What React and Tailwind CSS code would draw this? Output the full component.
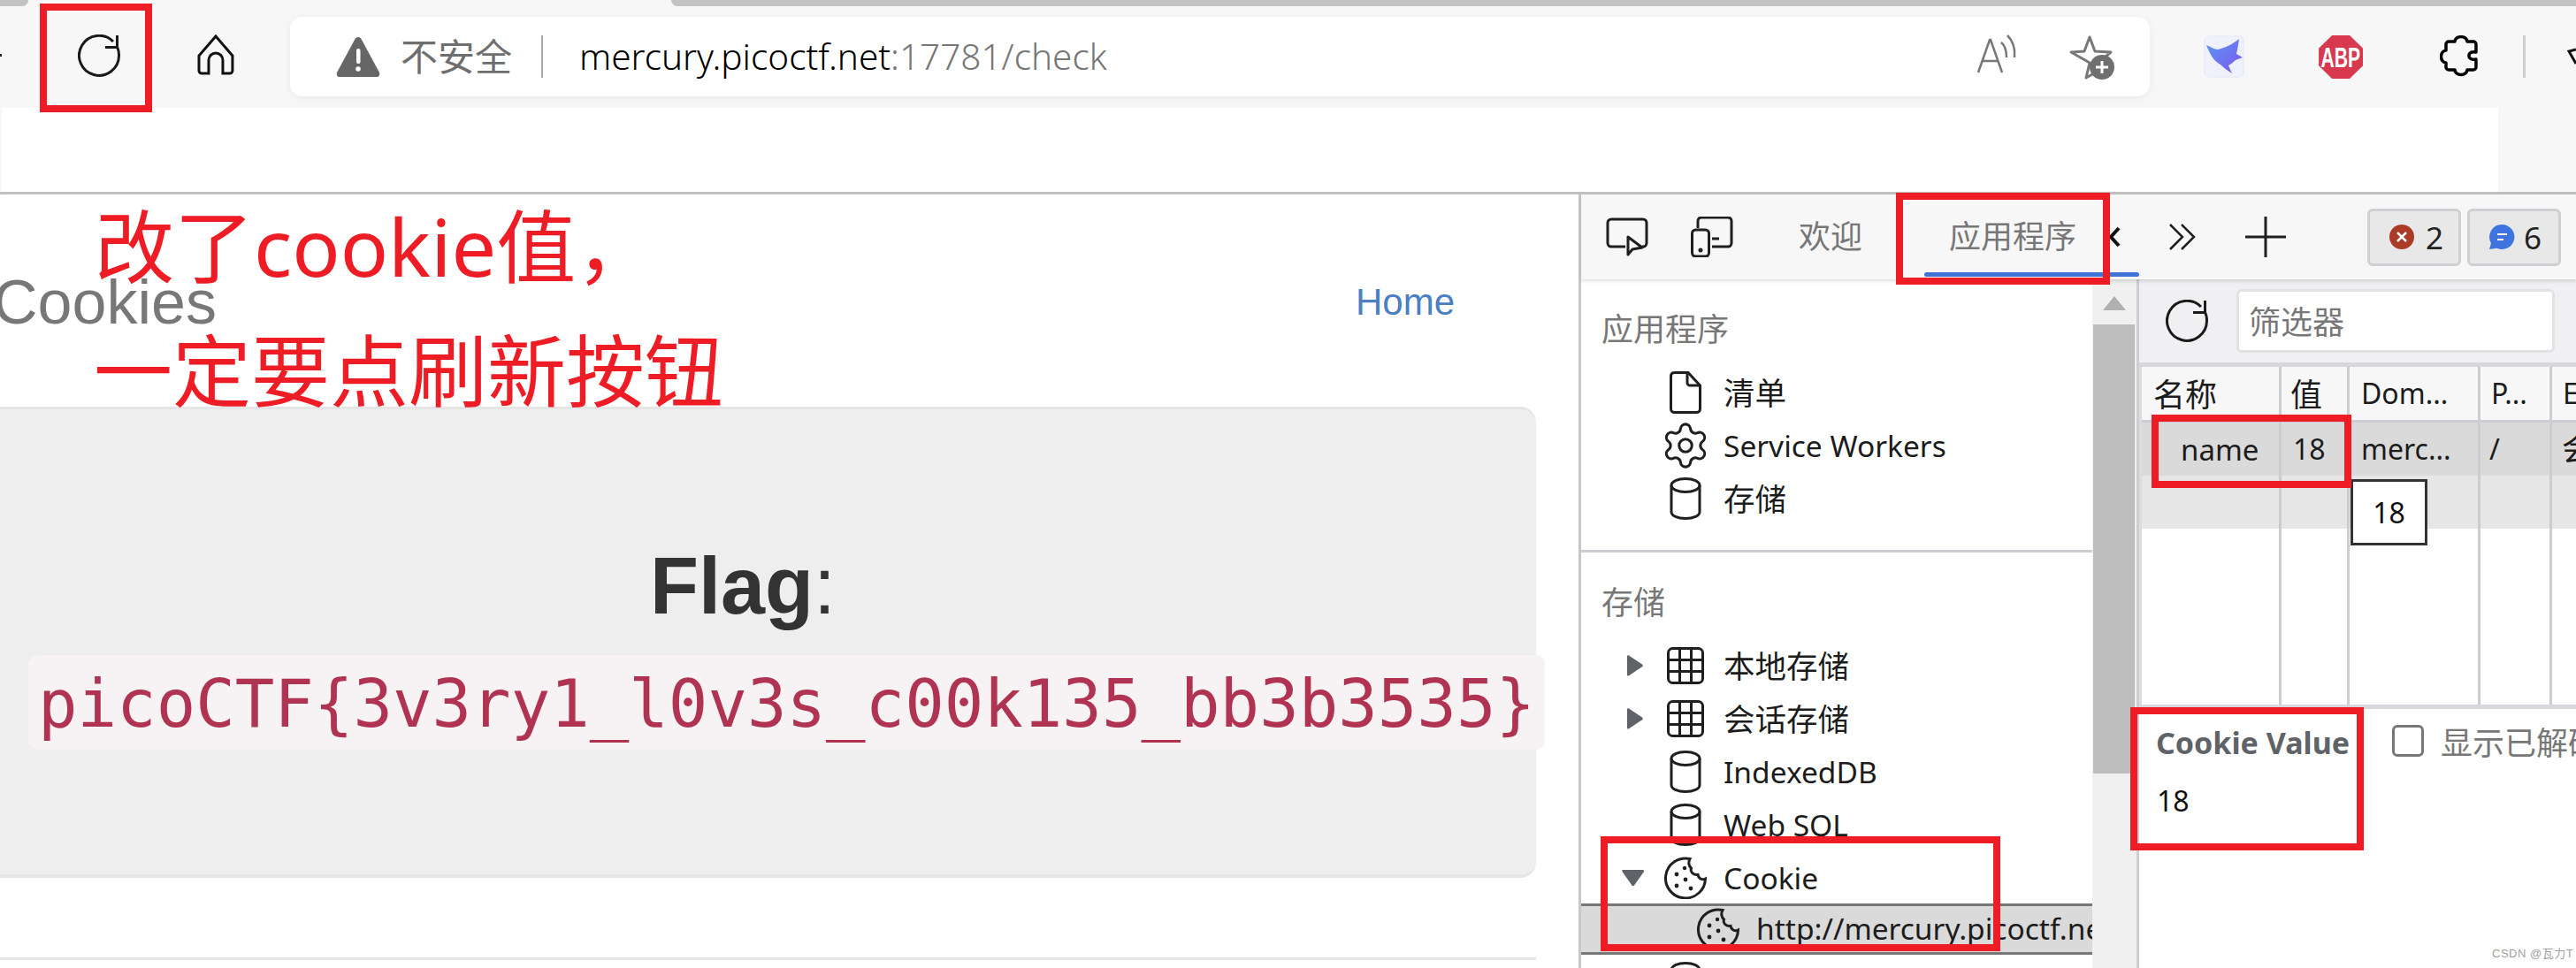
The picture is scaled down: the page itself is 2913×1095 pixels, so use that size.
import React from "react";
import { Settings } from "lucide-react";

const Refresh = ({ c = "w-[48px] h-[48px]", stroke = 3 }) => (
  <svg viewBox="0 0 48 48" className={c} fill="none" stroke="#1a1a1a" strokeWidth={stroke}>
    <path d="M40 8A22.500 22.500 0 1 0 46.500 24a22.500 22.500 0 0 0-2-10" />
    <path d="M44.500 1v13.500H31" />
  </svg>
);
const Cylinder = ({ c = "" }) => (
  <svg viewBox="0 0 36 48" className={"w-[36px] h-[48px] " + c} fill="none" stroke="#1f1f1f" strokeWidth="3">
    <ellipse cx="18" cy="9" rx="16" ry="7.500" />
    <path d="M2 9v30c0 4.500 7 7.500 16 7.500s16-3 16-7.500V9" />
  </svg>
);
const Doc = () => (
  <svg viewBox="0 0 36 48" className="w-[36px] h-[48px]" fill="none" stroke="#1f1f1f" strokeWidth="3">
    <path d="M5 1.500h16L34.500 16v26.500a4 4 0 0 1-4 4H5.500a4 4 0 0 1-4-4V5a4 4 0 0 1 4-3.500z" />
    <path d="M20 2v11a3 3 0 0 0 3 3h11" />
  </svg>
);
const Grid = () => (
  <svg viewBox="0 0 42 42" className="w-[42px] h-[42px]" fill="none" stroke="#1f1f1f" strokeWidth="3">
    <rect x="1.500" y="1.500" width="39" height="39" rx="5" />
    <path d="M14.500 2v38M27.500 2v38M2 14.500h38M2 27.500h38" />
  </svg>
);
const CookieI = () => (
  <svg viewBox="0 0 48 48" className="w-[48px] h-[48px] shrink-0" fill="none" stroke="#1f1f1f" strokeWidth="3">
    <path d="M29 2.500A22.500 22.500 0 1 0 46.500 25c-4 2-8-.5-8.500-4.500-5 .5-9-3-7.500-7.500-3-2-3.500-7-1.500-10.500z" />
    <g fill="#1f1f1f" stroke="none">
      <circle cx="14" cy="20" r="2.400" /><circle cx="23" cy="13" r="2.200" /><circle cx="24" cy="26" r="2.400" /><circle cx="14" cy="33" r="2.400" /><circle cx="30" cy="36" r="2.400" />
    </g>
  </svg>
);
const TriRight = () => (
  <svg viewBox="0 0 32 24" className="w-[32px] h-[24px]"><path d="M6 1.500c0-1 1-1.500 2-1l15 10c1 .8 1 2 0 2.800l-15 10c-1 .6-2 0-2-1z" fill="#5f6368" /></svg>
);
const TriDown = () => (
  <svg viewBox="0 0 32 20" className="w-[32px] h-[20px]"><path d="M1 1h23c1 0 1.500 1 1 2L14 18.500c-.8 1-2 1-2.600 0L.5 3C0 2 0 1 1 1z" fill="#5f6368" /></svg>
);

const Item = ({ icon, slot, cjk, children }) => (
  <div className="flex items-center h-[60px] pl-[46px] shrink-0">
    <div className="w-[32px] flex justify-start items-center">{slot}</div>
    <div className="w-[48px] ml-[16px] flex justify-center items-center">{icon}</div>
    <span className={cjk ? "ml-[19px] text-[#1c1c1c] text-[35.500px] leading-[60px] whitespace-nowrap" : "ml-[19px] text-[#1c1c1c] text-[33.500px] leading-[60px] whitespace-nowrap"}>{children}</span>
  </div>
);

const Red = ({ c }) => <div className={"absolute z-20 border-[8px] border-[#ee1c25] " + c} />;

export default function App() {
  return (
    <div className="relative w-[2913px] h-[1095px] overflow-hidden bg-white flex flex-col [font-family:'Noto_Sans','Noto_Sans_CJK_SC',sans-serif]">
      {/* tab strip */}
      <div className="h-[7px] shrink-0 flex bg-[#f7f7f7]">
        <div className="w-[32px] bg-[#c2c2c2] rounded-br-[8px]" />
        <div className="flex-1" />
        <div className="w-[2154px] bg-[#c2c2c2] rounded-bl-[8px]" />
      </div>

      {/* toolbar */}
      <div className="h-[115px] shrink-0 bg-[#f7f7f7] flex items-start">
        <div className="w-[2px] h-[3px] mt-[54px] bg-[#222]" />
        <div className="ml-[86px] mt-[32px]"><Refresh /></div>
        <svg viewBox="0 0 42 46" className="w-[42px] h-[46px] ml-[87px] mt-[32px]" fill="none" stroke="#111" strokeWidth="3">
          <path d="M21 2 40 24v17a3 3 0 0 1-3 3h-8V29a8 8 0 0 0-16 0v15H5a3 3 0 0 1-3-3V24z" />
        </svg>
        <div className="ml-[63px] mt-[12px] w-[2106px] h-[90px] bg-white rounded-[14px] shadow-[0_2px_10px_rgba(0,0,0,0.06)] flex items-center relative">
          <svg viewBox="0 0 50 46" className="w-[50px] h-[46px] ml-[52px]">
            <path d="M25 1c2 0 3 1 4 3l20 37c1 3-1 5-3 5H4c-2 0-4-2-3-5L21 4c1-2 2-3 4-3z" fill="#666" />
            <rect x="23" y="14" width="4.500" height="17" rx="2" fill="#fff" /><circle cx="25" cy="37" r="2.800" fill="#fff" />
          </svg>
          <span className="ml-[23px] text-[42px] leading-none text-[#6e6e6e]">不安全</span>
          <div className="ml-[33px] w-[2px] h-[48px] bg-[#a8a8a8]" />
          <span className="ml-[41px] text-[40.500px] leading-none whitespace-nowrap text-black font-light">mercury.picoctf.net<span className="text-[#777]">:17781/check</span></span>
          <svg viewBox="0 0 46 44" className="absolute left-[1908px] top-[20px] w-[46px] h-[44px]" fill="none" stroke="#777" strokeWidth="2.500">
            <path d="M1 43 14 6h1l13 37M6 30h17" />
            <path d="M27 9c5 4 6 10 6 17M34 1c6 6 9 15 8 25" />
          </svg>
          <svg viewBox="0 0 54 52" className="absolute left-[2011px] top-[20px] w-[54px] h-[52px]">
            <path d="M24 3 30 19l18 1-14 12 2 8-16 9 4-17L3 20l15-1z" fill="none" stroke="#777" strokeWidth="3" strokeLinejoin="round" />
            <circle cx="38" cy="37" r="14" fill="#6f6f6f" />
            <path d="M38 30v14M31 37h14" stroke="#fff" strokeWidth="3" />
          </svg>
        </div>
        <svg viewBox="0 0 46 48" className="w-[46px] h-[48px] ml-[61px] mt-[33px]">
          <defs>
            <linearGradient id="bird" x1="0" y1="0" x2="1" y2="1"><stop offset="0" stopColor="#5a96f2" /><stop offset="1" stopColor="#7d58ee" /></linearGradient>
          </defs>
          <rect x="1" y="1" width="44" height="46" rx="5" fill="#eff1fc" stroke="#e2e6f6" />
          <path d="M3 11C8 13 12 16 16 16 24 14 33 10 40 4 39 12 38 17 37 21L44 25 36 28C33 31 30 33 28 34L32 43C27 40 22 36 19 33 11 29 7 21 3 11z" fill="url(#bird)" />
        </svg>
        <div className="ml-[84px] mt-[33px] w-[50px] h-[49px] bg-[#d8394f] [clip-path:polygon(30%_0,70%_0,100%_30%,100%_70%,70%_100%,30%_100%,0_70%,0_30%)] flex items-center justify-center text-white font-bold text-[32px] leading-none [font-family:'Liberation_Sans',sans-serif]"><span className="inline-block scale-x-[0.66]">ABP</span></div>
        <svg viewBox="0 0 44 48" className="w-[44px] h-[48px] ml-[87px] mt-[33px]" fill="none" stroke="#000" strokeWidth="3.500" strokeLinejoin="round">
          <path d="M10 7H17c0-3 3-5.500 7-5.500S31 4 31 7H38a3 3 0 0 1 3 3v9c-5-1-8 1-8 4s3 5 8 4v9a3 3 0 0 1-3 3H31c0 3-3 5.500-7 5.500S17 42 17 39H10a3 3 0 0 1-3-3V31c-3 0-5.500-3-5.500-7S4 17 7 17V10a3 3 0 0 1 3-3z" />
        </svg>
        <div className="ml-[50px] mt-[33px] w-[3px] h-[48px] bg-[#cfcfcf]" />
        <svg viewBox="0 0 10 20" className="w-[10px] h-[20px] ml-[47px] mt-[47px]" fill="none" stroke="#111" strokeWidth="3"><path d="M10 2 2 4l8 14" /></svg>
      </div>

      {/* blank band */}
      <div className="h-[95px] shrink-0 bg-[#f7f7f7] flex pl-[2px]">
        <div className="w-[2823px] bg-white" />
      </div>
      <div className="h-[3px] shrink-0 bg-[#c0c0c0]" />

      {/* main */}
      <div className="flex-1 flex min-h-0">
        {/* page */}
        <div className="w-[1785px] shrink-0 flex flex-col overflow-hidden [font-family:'Liberation_Sans',sans-serif]">
          <div className="h-[240px] shrink-0">
            <div className="pt-[77px] flex items-center justify-between w-[1653px] ml-[-8px]">
              <span className="text-[70px] leading-[90px] text-[#777]">Cookies</span>
              <span className="text-[42px] leading-[90px] text-[#4a7fc4]">Home</span>
            </div>
          </div>
          <div className="w-[1737px] h-[533px] shrink-0 bg-[#eeeeee] border-t-[3px] border-b-[4px] border-[#e5e5e5] rounded-br-[18px] rounded-tr-[18px] pt-[150px]">
            <div className="w-[1680px] text-center text-[90px] leading-[100px] text-[#333]"><b>Flag</b>:</div>
            <div className="mt-[28px] ml-[32px] w-[1715px] h-[107px] bg-[#f7f2f4] rounded-[10px] flex items-center pl-[11px] pt-[2px] text-[74px] leading-none whitespace-nowrap text-[#b03352] [font-family:'DejaVu_Sans_Mono',monospace]">
              picoCTF{"{"}3v3ry1_l0v3s_c00k135_bb3b3535{"}"}
            </div>
          </div>
          <div className="mt-[90px] w-[1737px] h-[3px] bg-[#e5e5e5] shrink-0" />
        </div>
        <div className="w-[3px] shrink-0 bg-[#c8c8cc]" />

        {/* devtools */}
        <div className="flex-1 flex flex-col min-w-0">
          <div className="h-[96px] shrink-0 bg-[#f7f7f7] shadow-[0_2px_4px_rgba(0,0,0,0.14)] relative z-10 flex items-center">
            <svg viewBox="0 0 48 44" className="w-[48px] h-[44px] ml-[28px]" fill="none" stroke="#1f1f1f" strokeWidth="3">
              <path d="M22 33H6a4 4 0 0 1-4-4V6a4 4 0 0 1 4-4h36a4 4 0 0 1 4 4v23a4 4 0 0 1-4 4h-1" />
              <path d="M25 22v20l5-6 11-2z" strokeLinejoin="round" />
            </svg>
            <svg viewBox="0 0 48 46" className="w-[48px] h-[46px] ml-[48px]" fill="none" stroke="#1f1f1f" strokeWidth="3">
              <path d="M8 13V5a4 4 0 0 1 4-4h30a4 4 0 0 1 4 4v25a4 4 0 0 1-4 4H24M24 25h8" />
              <rect x="1.500" y="15" width="19" height="30" rx="4" />
              <circle cx="11" cy="38" r="1" fill="#1f1f1f" />
            </svg>
            <span className="ml-[74px] text-[36px] leading-none text-[#777]">欢迎</span>
            <div className="ml-[70px] w-[243px] h-full relative flex items-center pl-[28px]">
              <span className="text-[36px] leading-none text-[#777]">应用程序</span>
              <svg viewBox="0 0 14 24" className="w-[14px] h-[24px] ml-[36px]" fill="none" stroke="#111" strokeWidth="4"><path d="M12 2 3 12l9 10" /></svg>
              <div className="absolute left-0 right-0 top-[88px] h-[5px] rounded-[3px] bg-[#3f74d6]" />
            </div>
            <svg viewBox="0 0 30 30" className="w-[30px] h-[30px] ml-[34px]" fill="none" stroke="#1f1f1f" strokeWidth="2.500"><path d="M1 1l14 14L1 29M14 1l14 14-14 14" /></svg>
            <svg viewBox="0 0 46 46" className="w-[46px] h-[46px] ml-[56px]" fill="none" stroke="#1f1f1f" strokeWidth="3"><path d="M23 0v46M0 23h46" /></svg>
            <div className="ml-[92px] w-[106px] h-[65px] bg-[#e8e8e8] border-[3px] border-[#d0d0d4] rounded-[6px] flex items-center pl-[22px]">
              <svg viewBox="0 0 28 28" className="w-[28px] h-[28px]"><circle cx="14" cy="14" r="14" fill="#ab3a26" /><path d="M9 9l10 10M19 9 9 19" stroke="#fff" strokeWidth="2.500" /></svg>
              <span className="ml-[13px] text-[35px] leading-none text-[#222]">2</span>
            </div>
            <div className="ml-[7px] w-[106px] h-[65px] bg-[#e8e8e8] border-[3px] border-[#d0d0d4] rounded-[6px] flex items-center pl-[21px]">
              <svg viewBox="0 0 30 30" className="w-[30px] h-[30px]"><path d="M15.500 1a14 14 0 1 1-6 26.700L1 29l2-7A14 14 0 0 1 15.500 1z" fill="#3f74e0" /><path d="M10 12h11M10 18h7" stroke="#fff" strokeWidth="2" /></svg>
              <span className="ml-[10px] text-[35px] leading-none text-[#222]">6</span>
            </div>
          </div>

          <div className="flex-1 flex min-h-0">
            {/* sidebar */}
            <div className="w-[578px] shrink-0 flex flex-col overflow-hidden">
              <div className="mt-[27px] h-[60px] shrink-0 pl-[23px] text-[36px] leading-[60px] text-[#777]">应用程序</div>
              <div className="mt-[11px] flex flex-col shrink-0">
                <Item cjk icon={<Doc />}>清单</Item>
                <Item icon={<Settings size={58} strokeWidth={1.25} color="#1f1f1f" className="shrink-0" />}>Service Workers</Item>
                <Item cjk icon={<Cylinder />}>存储</Item>
              </div>
              <div className="mt-[28px] h-[3px] shrink-0 bg-[#ccccd2]" />
              <div className="mt-[27px] h-[60px] shrink-0 pl-[23px] text-[36px] leading-[60px] text-[#777]">存储</div>
              <div className="mt-[11px] flex flex-col shrink-0">
                <Item cjk slot={<TriRight />} icon={<Grid />}>本地存储</Item>
                <Item cjk slot={<TriRight />} icon={<Grid />}>会话存储</Item>
                <Item icon={<Cylinder />}>IndexedDB</Item>
                <Item icon={<Cylinder />}>Web SQL</Item>
                <Item slot={<TriDown />} icon={<CookieI />}>Cookie</Item>
              </div>
              <div className="h-[58px] shrink-0 -mt-px border-y-[3px] border-[#777] bg-[#dadada] flex items-center pl-[131px] overflow-hidden">
                <CookieI />
                <span className="ml-[19px] text-[33.500px] leading-none text-[#1c1c1c] whitespace-nowrap">http://mercury.picoctf.net/</span>
              </div>
              <div className="pl-[100px] pt-[8px] shrink-0"><Cylinder /></div>
            </div>

            {/* scrollbar */}
            <div className="w-[50px] shrink-0 bg-[#f0f0f0] flex flex-col items-center">
              <svg viewBox="0 0 26 16" className="w-[26px] h-[16px] mt-[19px]"><path d="M13 0 26 16H0z" fill="#b0b0b0" /></svg>
              <div className="mt-[16px] w-[47px] h-[508px] bg-[#bdbdbd] mr-[2px]" />
            </div>
            <div className="w-[3px] shrink-0 bg-[#cdcdd2]" />

            {/* right pane */}
            <div className="flex-1 flex flex-col min-w-0 overflow-hidden">
              <div className="h-[94px] shrink-0 bg-[#f0f0f2] flex items-center">
                <div className="ml-[30px]"><Refresh /></div>
                <div className="ml-[32px] w-[360px] h-[72px] bg-white rounded-[6px] border-[3px] border-[#e2e2e6] flex items-center pl-[11px] pt-[4px] text-[36px] text-[#777] leading-none">筛选器</div>
              </div>
              <div className="h-[392px] shrink-0 border-y-[5px] border-[#d8d8dc] pl-[3px] bg-[#dcdce0]">
                <div className="h-full bg-white grid grid-cols-[158px_77px_148px_81px_1fr] grid-rows-[63px_60px_60px_1fr] text-[32px] text-[#1c1c1c] leading-none whitespace-nowrap overflow-hidden">
                  <div className="bg-[#f7f7f7] border-r-[3px] border-b-[3px] border-[#ccccd2] flex items-center pl-[13px] pt-[3px] text-[36px]">名称</div>
                  <div className="bg-[#f7f7f7] border-r-[3px] border-b-[3px] border-[#ccccd2] flex items-center pl-[10px] pt-[3px] text-[36px]">值</div>
                  <div className="bg-[#f7f7f7] border-r-[3px] border-b-[3px] border-[#ccccd2] flex items-center pl-[13px]">Dom...</div>
                  <div className="bg-[#f7f7f7] border-r-[3px] border-b-[3px] border-[#ccccd2] flex items-center pl-[12px]">P...</div>
                  <div className="bg-[#f7f7f7] border-b-[3px] border-[#ccccd2] flex items-center pl-[12px]">Expires</div>

                  <div className="bg-[#dadada] border-r-[3px] border-[#ccccd2] flex items-center pl-[44px] text-[33px]">name</div>
                  <div className="bg-[#dadada] border-r-[3px] border-[#ccccd2] flex items-center pl-[13px]">18</div>
                  <div className="bg-[#dadada] border-r-[3px] border-[#ccccd2] flex items-center pl-[13px]">merc...</div>
                  <div className="bg-[#dadada] border-r-[3px] border-[#ccccd2] flex items-center pl-[10px]">/</div>
                  <div className="bg-[#dadada] flex items-center pl-[11px] text-[36px]">会话</div>

                  <div className="bg-[#e6e6e6] border-r-[3px] border-[#ccccd2]" />
                  <div className="bg-[#e6e6e6] border-r-[3px] border-[#ccccd2]" />
                  <div className="bg-[#e6e6e6] border-r-[3px] border-[#ccccd2]" />
                  <div className="bg-[#e6e6e6] border-r-[3px] border-[#ccccd2]" />
                  <div className="bg-[#e6e6e6]" />

                  <div className="border-r-[3px] border-[#ccccd2]" />
                  <div className="border-r-[3px] border-[#ccccd2]" />
                  <div className="border-r-[3px] border-[#ccccd2]" />
                  <div className="border-r-[3px] border-[#ccccd2]" />
                  <div />
                </div>
              </div>
              <div className="flex-1">
                <div className="flex items-center h-[72px] pl-[19px]">
                  <span className="pt-[4px] text-[34px] leading-none font-bold text-[#5f6368] whitespace-nowrap">Cookie Value</span>
                  <div className="ml-[48px] w-[36px] h-[36px] shrink-0 rounded-[6px] border-[3px] border-[#777]" />
                  <span className="ml-[19px] pt-[5px] text-[36px] leading-none text-[#777] whitespace-nowrap">显示已解码</span>
                </div>
                <div className="pl-[20px] mt-[12px] text-[32px] leading-[40px] text-[#111]">18</div>
              </div>
            </div>
          </div>
        </div>
      </div>

      {/* overlays */}
      <div className="absolute left-[2658px] top-[542px] w-[87px] h-[75px] border-[3px] border-[#333] bg-white flex items-center justify-center text-[32px] leading-none text-[#111]">18</div>
      <div className="absolute left-[107px] top-[229px] text-[90px] leading-[98px] text-[#ee1c25] whitespace-nowrap">改了cookie值，</div>
      <div className="absolute left-[106px] top-[370px] text-[89px] leading-[98px] text-[#ee1c25] whitespace-nowrap">一定要点刷新按钮</div>
      <Red c="left-[45px] top-[4px] w-[127px] h-[123px]" />
      <Red c="left-[2144px] top-[218px] w-[242px] h-[104px]" />
      <Red c="left-[2433px] top-[469px] w-[226px] h-[83px]" />
      <Red c="left-[2409px] top-[800px] w-[264px] h-[162px]" />
      <Red c="left-[1810px] top-[946px] w-[452px] h-[130px]" />
      <div className="absolute left-[2818px] top-[1072px] text-[13px] leading-none tracking-[0.5px] text-[#a0a0a0] whitespace-nowrap [font-family:'Liberation_Sans','Noto_Sans_CJK_SC',sans-serif]">CSDN @瓦力T</div>
    </div>
  );
}
